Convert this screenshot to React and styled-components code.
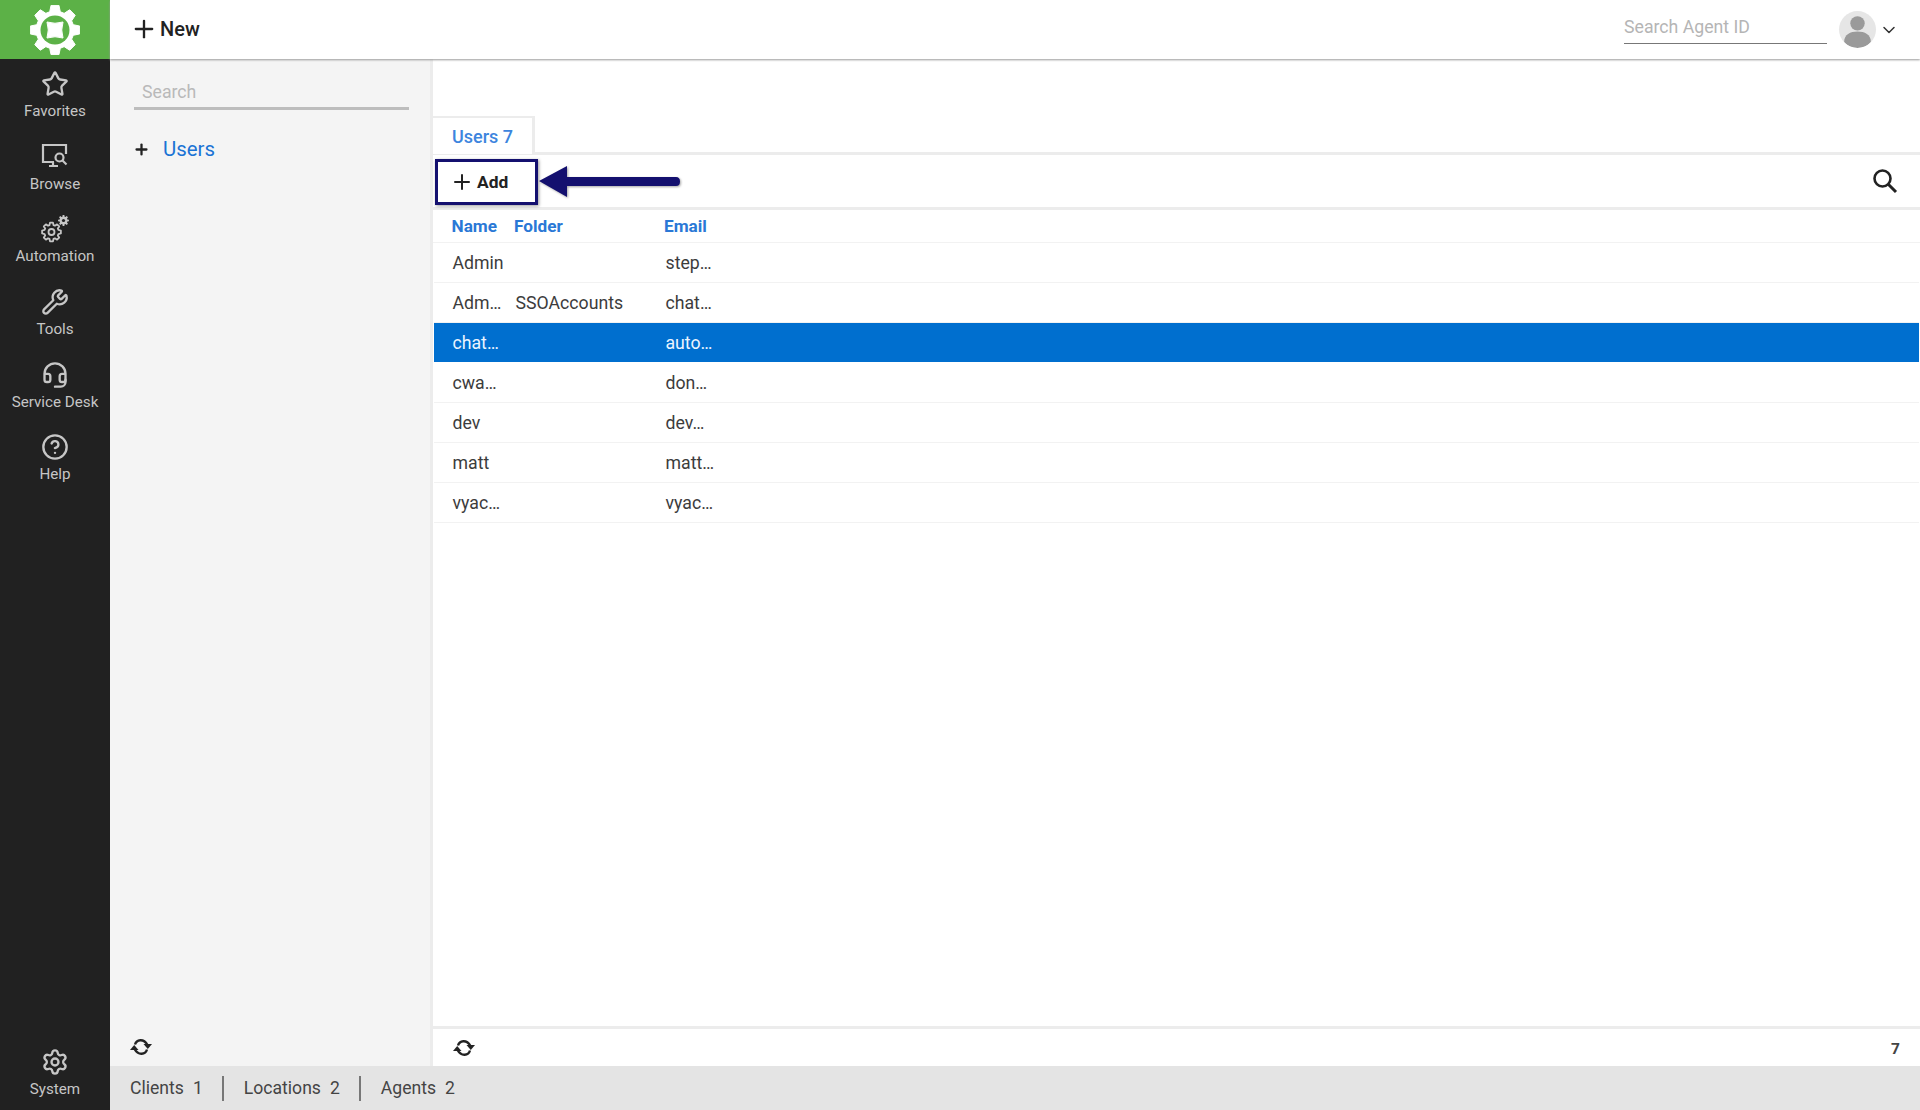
import React from 'react';
import styled, { createGlobalStyle } from 'styled-components';
import { Star, Wrench, Headset, CircleHelp, Settings, Plus, ChevronDown } from 'lucide-react';

const users = [
  { name: 'Admin', folder: '', email: 'step…' },
  { name: 'Adm…', folder: 'SSOAccounts', email: 'chat…' },
  { name: 'chat…', folder: '', email: 'auto…', selected: true },
  { name: 'cwa…', folder: '', email: 'don…' },
  { name: 'dev', folder: '', email: 'dev…' },
  { name: 'matt', folder: '', email: 'matt…' },
  { name: 'vyac…', folder: '', email: 'vyac…' },
];

const gearPath = (cx, cy, outer, inner, teeth) => {
  const step = (Math.PI * 2) / teeth;
  let d = '';
  for (let i = 0; i < teeth; i++) {
    const a = i * step - Math.PI / 2;
    const pts = [
      [inner, a - step * 0.36],
      [outer, a - step * 0.2],
      [outer, a + step * 0.2],
      [inner, a + step * 0.36],
    ];
    pts.forEach(([r, t], j) => {
      const x = (cx + r * Math.cos(t)).toFixed(2);
      const y = (cy + r * Math.sin(t)).toFixed(2);
      d += `${i === 0 && j === 0 ? 'M' : 'L'}${x} ${y} `;
    });
  }
  return d + 'Z';
};

const LogoGear = () => (
  <svg width="50" height="50" viewBox="0 0 50 50">
    <path d={gearPath(25, 25, 25, 19, 8)} fill="#fff" stroke="#fff" strokeLinejoin="round" />
    <circle cx="25" cy="25" r="14.5" fill="#5cb147" />
    <path d="M17 17 Q25 19.5 33 17 Q30.5 25 33 33 Q25 30.5 17 33 Q19.5 25 17 17Z" fill="#fff" stroke="#fff" strokeLinejoin="round" />
  </svg>
);

const BrowseIcon = () => (
  <svg width="28" height="28" viewBox="0 0 28 28" fill="none" stroke="currentColor" strokeWidth="2.2">
    <path d="M13 19H2V2h23v9" />
    <path d="M8 23h9M12 19v4" />
    <circle cx="18.5" cy="14.5" r="4" />
    <path d="M21.5 17.5l4 4" />
  </svg>
);

const AutomationIcon = () => (
  <svg width="28" height="28" viewBox="0 0 28 28" fill="none" stroke="currentColor">
    <path d={gearPath(10.5, 17, 9.5, 7.2, 8)} strokeWidth="1.8" strokeLinejoin="round" />
    <circle cx="10.5" cy="17" r="3" strokeWidth="1.8" />
    <path d={gearPath(22.5, 5.5, 5.5, 4, 8)} fill="currentColor" stroke="none" />
    <circle cx="22.5" cy="5.5" r="1.6" fill="#212121" stroke="none" />
  </svg>
);

const SyncIcon = () => (
  <svg width="24" height="24" viewBox="0 0 24 24" fill="none" stroke="#222" strokeWidth="2.4">
    <path d="M6 9.5C7.5 4.5 14.5 3 18.5 10" />
    <path d="M18 14.5C16.5 19.5 9.5 21 5.5 14" />
    <path d="M14.5 9h8.5l-4.2 5z" fill="#222" stroke="none" />
    <path d="M9.5 15H1l4.2-5z" fill="#222" stroke="none" />
  </svg>
);

const SearchIcon = () => (
  <svg width="26" height="26" viewBox="0 0 26 26" fill="none" stroke="#222">
    <circle cx="10.5" cy="10.5" r="8" strokeWidth="2.6" />
    <path d="M16.5 16.5l7.5 7.5" strokeWidth="3" />
  </svg>
);

const navItems = [
  { label: 'Favorites', icon: <Star size={28} strokeWidth={2} /> },
  { label: 'Browse', icon: <BrowseIcon /> },
  { label: 'Automation', icon: <AutomationIcon /> },
  { label: 'Tools', icon: <Wrench size={28} strokeWidth={2} /> },
  { label: 'Service Desk', icon: <Headset size={28} strokeWidth={2} /> },
  { label: 'Help', icon: <CircleHelp size={28} strokeWidth={2} /> },
];

export default function App() {
  return (
    <>
      <GlobalStyle />
      <Page>
        <Sidebar>
          <Logo>
            <LogoGear />
          </Logo>
          {navItems.map((item) => (
            <NavItem key={item.label}>
              {item.icon}
              <span>{item.label}</span>
            </NavItem>
          ))}
          <NavSpacer />
          <NavItem>
            <Settings size={28} strokeWidth={2} />
            <span>System</span>
          </NavItem>
        </Sidebar>

        <Content>
          <TopBar>
            <NewButton>
              <Plus size={28} strokeWidth={2} />
              New
            </NewButton>
            <AgentSearch>Search Agent ID</AgentSearch>
            <Avatar>
              <svg width="37" height="37" viewBox="0 0 36 36">
                <circle cx="18" cy="12" r="7" fill="#9a9a9a" />
                <path d="M5 30c0-7 6-10 13-10s13 3 13 10c-3 4-8 6-13 6S8 34 5 30z" fill="#9a9a9a" />
              </svg>
            </Avatar>
            <ChevronDown size={20} strokeWidth={1.8} color="#333" />
          </TopBar>

          <Body>
            <LeftPanel>
              <PanelSearch>Search</PanelSearch>
              <TreeItem>
                <Plus size={17} strokeWidth={3.2} color="#222" />
                <span>Users</span>
              </TreeItem>
              <PanelFooter>
                <SyncIcon />
              </PanelFooter>
            </LeftPanel>

            <Main>
              <Tabs>
                <Tab>Users 7</Tab>
              </Tabs>
              <Toolbar>
                <AddButton>
                  <Plus size={24} strokeWidth={2} />
                  Add
                </AddButton>
                <Callout />
                <CalloutArrow viewBox="0 0 142 34" width="142" height="34">
                  <path d="M0 16 L28 1 L28 12 L137 12 Q141 12 141 16.5 Q141 21 137 21 L28 21 L28 32 Z" fill="#14106f" />
                </CalloutArrow>
                <SearchIcon />
              </Toolbar>
              <HeaderRow>
                <span>Name</span>
                <span>Folder</span>
                <span>Email</span>
              </HeaderRow>
              {users.map((u) => (
                <Row key={u.name + u.email} $selected={u.selected}>
                  <span>{u.name}</span>
                  <span>{u.folder}</span>
                  <span>{u.email}</span>
                </Row>
              ))}
              <MainFooter>
                <SyncIcon />
                <Count>7</Count>
              </MainFooter>
            </Main>
          </Body>

          <StatusBar>
            <StatusItem>Clients<b>1</b></StatusItem>
            <StatusItem>Locations<b>2</b></StatusItem>
            <StatusItem>Agents<b>2</b></StatusItem>
          </StatusBar>
        </Content>
      </Page>
    </>
  );
}

const GlobalStyle = createGlobalStyle`
  html, body, #root {
    margin: 0;
    height: 100%;
  }
  body {
    font-family: Roboto, "Liberation Sans", sans-serif;
    background: #fff;
    overflow: hidden;
  }
`;

const Page = styled.div`
  display: flex;
  width: 1920px;
  height: 1110px;
`;

const Sidebar = styled.nav`
  display: flex;
  flex-direction: column;
  flex: 0 0 110px;
  background: #212121;
  color: #c6c6c6;
`;

const Logo = styled.div`
  display: flex;
  align-items: center;
  justify-content: center;
  height: 59px;
  background: #5cb147;
`;

const NavItem = styled.div`
  display: flex;
  flex-direction: column;
  align-items: center;
  justify-content: center;
  gap: 4px;
  height: 72.7px;
  padding-bottom: 1px;
  box-sizing: border-box;
  font-size: 15.2px;
  white-space: nowrap;
`;

const NavSpacer = styled.div`
  flex: 1;
`;

const Content = styled.div`
  display: flex;
  flex-direction: column;
  flex: 1;
  min-width: 0;
`;

const TopBar = styled.header`
  display: flex;
  align-items: center;
  flex: 0 0 59px;
  padding: 0 21px 0 20px;
  box-sizing: border-box;
  background: #fff;
  box-shadow: 0 1px 2px #9a9a9a;
  position: relative;
  z-index: 1;
`;

const NewButton = styled.div`
  display: flex;
  align-items: center;
  gap: 2px;
  margin-right: auto;
  margin-top: -1px;
  font-size: 20px;
  font-weight: 500;
  color: #222;
`;

const AgentSearch = styled.div`
  width: 203px;
  height: 43px;
  margin-bottom: 14px;
  box-sizing: border-box;
  padding-top: 16px;
  border-bottom: 1px solid #777;
  font-size: 17.7px;
  color: #b5b5b5;
`;

const Avatar = styled.div`
  width: 37px;
  height: 37px;
  margin: 0 3px 0 12px;
  border-radius: 50%;
  background: #e6e6e6;
  overflow: hidden;
`;

const Body = styled.div`
  display: flex;
  flex: 1;
  min-height: 0;
`;

const LeftPanel = styled.aside`
  display: flex;
  flex-direction: column;
  flex: 0 0 323px;
  box-sizing: border-box;
  padding: 18px 21px 0 24px;
  background: #f4f4f4;
  border-right: 3px solid #ececec;
`;

const PanelSearch = styled.div`
  height: 33px;
  padding: 5px 0 0 8px;
  box-sizing: border-box;
  border-bottom: 3px solid #bdbdbd;
  font-size: 17.7px;
  color: #b9b9b9;
`;

const TreeItem = styled.div`
  display: flex;
  align-items: center;
  gap: 13px;
  margin-top: 27px;
  margin-left: -1px;
  font-size: 20.4px;
  color: #1a73d4;
`;

const PanelFooter = styled.div`
  display: flex;
  align-items: center;
  margin-top: auto;
  height: 39px;
  margin-left: -5px;
`;

const Main = styled.main`
  display: flex;
  flex-direction: column;
  flex: 1;
  min-width: 0;
  position: relative;
`;

const Tabs = styled.div`
  display: flex;
  align-items: flex-end;
  flex: 0 0 96px;
  box-sizing: border-box;
  border-bottom: 3px solid #ececec;
`;

const Tab = styled.div`
  width: 102px;
  height: 38px;
  margin-bottom: -2px;
  box-sizing: border-box;
  padding: 8px 0 0 19px;
  background: #fff;
  border: solid #ececec;
  border-width: 2px 3px 0 0;
  font-size: 18px;
  font-weight: 500;
  color: #3d85de;
`;

const Toolbar = styled.div`
  display: flex;
  align-items: center;
  justify-content: space-between;
  flex: 0 0 55px;
  box-sizing: border-box;
  padding: 0 22px 0 17px;
  border-bottom: 3px solid #ececec;
  position: relative;
`;

const AddButton = styled.div`
  display: flex;
  align-items: center;
  gap: 3px;
  margin-top: 1px;
  font-size: 17.4px;
  font-weight: 700;
  color: #222;
`;

const Callout = styled.div`
  position: absolute;
  left: 2px;
  top: 4px;
  width: 103px;
  height: 46px;
  box-sizing: border-box;
  border: 3px solid #14106f;
  box-shadow: 1px 1px 3px rgba(0, 0, 0, 0.4);
`;

const CalloutArrow = styled.svg`
  position: absolute;
  left: 106px;
  top: 10px;
  filter: drop-shadow(1px 1px 1px rgba(0, 0, 0, 0.35));
`;

const columns = `
  display: grid;
  align-items: center;
  box-sizing: border-box;
`;

const HeaderRow = styled.div`
  ${columns}
  grid-template-columns: 62.5px 150px 1fr;
  flex: 0 0 33px;
  padding-left: 18.5px;
  border-bottom: 1px solid #f2f2f2;
  font-size: 17.2px;
  font-weight: 700;
  color: #2a78d6;
`;

const Row = styled.div`
  ${columns}
  grid-template-columns: 63px 150px 1fr;
  flex: 0 0 40px;
  margin: 0 1px;
  padding-left: 18.5px;
  font-size: 17.7px;
  border-bottom: 1px solid ${(p) => (p.$selected ? '#fff' : '#f2f2f2')};
  background: ${(p) => (p.$selected ? '#006fcf' : '#fff')};
  color: ${(p) => (p.$selected ? '#eaf4ff' : '#3c3c3c')};
`;

const MainFooter = styled.div`
  display: flex;
  align-items: center;
  justify-content: space-between;
  margin-top: auto;
  height: 40px;
  padding: 0 20px 0 19px;
  box-sizing: border-box;
  border-top: 3px solid #ececec;
`;

const Count = styled.span`
  font-size: 15.5px;
  font-weight: 700;
  color: #444;
  padding-top: 2px;
`;

const StatusBar = styled.footer`
  display: flex;
  align-items: center;
  flex: 0 0 44px;
  padding-left: 20px;
  background: #e4e4e4;
  font-size: 17.6px;
  color: #444;
`;

const StatusItem = styled.div`
  display: flex;
  gap: 9px;
  height: 25px;
  align-items: center;

  & b {
    font-weight: 400;
  }

  & + & {
    margin-left: 19px;
    padding-left: 20px;
    border-left: 2px solid #777;
  }
`;
